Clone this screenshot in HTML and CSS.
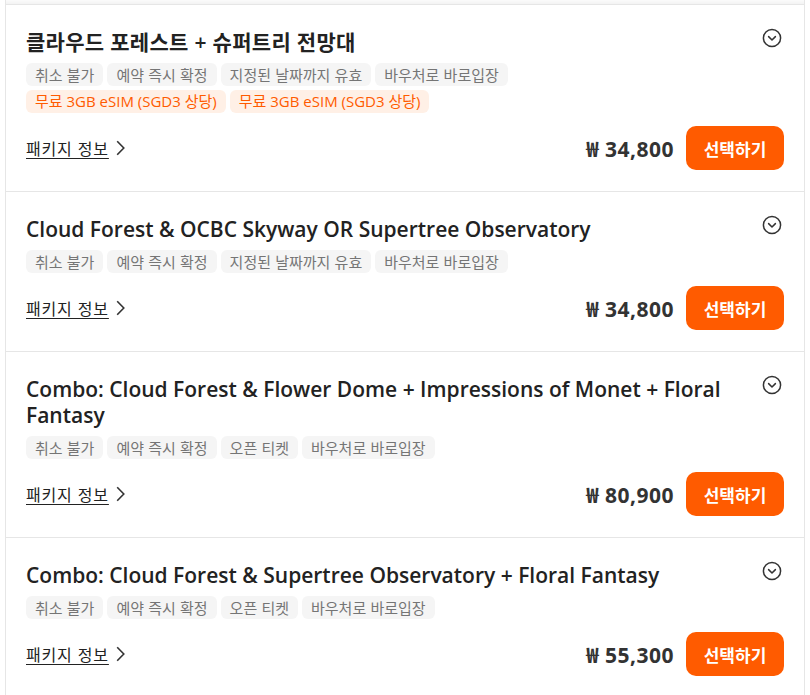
FILE: index.html
```html
<!DOCTYPE html>
<html lang="ko">
<head>
<meta charset="utf-8">
<link rel="stylesheet" href="styles.css">
</head>
<body>
<div class="list">
  <div class="stub"></div>

  <section class="card">
    <div class="head">
      <h2 class="title title-ko">클라우드 포레스트 + 슈퍼트리 전망대</h2>
      <svg class="toggle" viewBox="0 0 20 20" width="20" height="20"><circle cx="10" cy="10" r="8.6" fill="none" stroke="#333" stroke-width="1.5"/><path d="M6.6 8.6 10 12l3.4-3.4" fill="none" stroke="#333" stroke-width="1.5" stroke-linecap="round" stroke-linejoin="round"/></svg>
    </div>
    <div class="tags">
      <span class="tag">취소 불가</span>
      <span class="tag">예약 즉시 확정</span>
      <span class="tag">지정된 날짜까지 유효</span>
      <span class="tag">바우처로 바로입장</span>
    </div>
    <div class="tags">
      <span class="tag promo">무료 3GB eSIM (SGD3 상당)</span>
      <span class="tag promo">무료 3GB eSIM (SGD3 상당)</span>
    </div>
    <div class="foot">
      <a class="info" href="#">패키지 정보</a><svg class="arrow" viewBox="0 0 9 16" width="9" height="16"><path d="M1.2 1.2 7.8 8l-6.6 6.8" fill="none" stroke="#333" stroke-width="1.6"/></svg>
      <span class="price">₩ 34,800</span>
      <button class="select">선택하기</button>
    </div>
  </section>

  <section class="card">
    <div class="head">
      <h2 class="title">Cloud Forest &amp; OCBC Skyway OR Supertree Observatory</h2>
      <svg class="toggle" viewBox="0 0 20 20" width="20" height="20"><circle cx="10" cy="10" r="8.6" fill="none" stroke="#333" stroke-width="1.5"/><path d="M6.6 8.6 10 12l3.4-3.4" fill="none" stroke="#333" stroke-width="1.5" stroke-linecap="round" stroke-linejoin="round"/></svg>
    </div>
    <div class="tags">
      <span class="tag">취소 불가</span>
      <span class="tag">예약 즉시 확정</span>
      <span class="tag">지정된 날짜까지 유효</span>
      <span class="tag">바우처로 바로입장</span>
    </div>
    <div class="foot">
      <a class="info" href="#">패키지 정보</a><svg class="arrow" viewBox="0 0 9 16" width="9" height="16"><path d="M1.2 1.2 7.8 8l-6.6 6.8" fill="none" stroke="#333" stroke-width="1.6"/></svg>
      <span class="price">₩ 34,800</span>
      <button class="select">선택하기</button>
    </div>
  </section>

  <section class="card">
    <div class="head">
      <h2 class="title">Combo: Cloud Forest &amp; Flower Dome + Impressions of Monet + Floral Fantasy</h2>
      <svg class="toggle" viewBox="0 0 20 20" width="20" height="20"><circle cx="10" cy="10" r="8.6" fill="none" stroke="#333" stroke-width="1.5"/><path d="M6.6 8.6 10 12l3.4-3.4" fill="none" stroke="#333" stroke-width="1.5" stroke-linecap="round" stroke-linejoin="round"/></svg>
    </div>
    <div class="tags">
      <span class="tag">취소 불가</span>
      <span class="tag">예약 즉시 확정</span>
      <span class="tag">오픈 티켓</span>
      <span class="tag">바우처로 바로입장</span>
    </div>
    <div class="foot">
      <a class="info" href="#">패키지 정보</a><svg class="arrow" viewBox="0 0 9 16" width="9" height="16"><path d="M1.2 1.2 7.8 8l-6.6 6.8" fill="none" stroke="#333" stroke-width="1.6"/></svg>
      <span class="price">₩ 80,900</span>
      <button class="select">선택하기</button>
    </div>
  </section>

  <section class="card">
    <div class="head">
      <h2 class="title">Combo: Cloud Forest &amp; Supertree Observatory + Floral Fantasy</h2>
      <svg class="toggle" viewBox="0 0 20 20" width="20" height="20"><circle cx="10" cy="10" r="8.6" fill="none" stroke="#333" stroke-width="1.5"/><path d="M6.6 8.6 10 12l3.4-3.4" fill="none" stroke="#333" stroke-width="1.5" stroke-linecap="round" stroke-linejoin="round"/></svg>
    </div>
    <div class="tags">
      <span class="tag">취소 불가</span>
      <span class="tag">예약 즉시 확정</span>
      <span class="tag">오픈 티켓</span>
      <span class="tag">바우처로 바로입장</span>
    </div>
    <div class="foot">
      <a class="info" href="#">패키지 정보</a><svg class="arrow" viewBox="0 0 9 16" width="9" height="16"><path d="M1.2 1.2 7.8 8l-6.6 6.8" fill="none" stroke="#333" stroke-width="1.6"/></svg>
      <span class="price">₩ 55,300</span>
      <button class="select">선택하기</button>
    </div>
  </section>
</div>
</body>
</html>
```

FILE: styles.css
```css
* { box-sizing: border-box; }
html, body { margin: 0; padding: 0; background: #fff; }
body {
  font-family: "Open Sans", "Noto Sans CJK KR", sans-serif;
  color: #222;
}
.list {
  margin: 0 5px;
  width: 800px;
  border-left: 1px solid #e6e6e6;
  border-right: 1px solid #e6e6e6;
}
.stub {
  height: 4px;
  background: linear-gradient(#fbfbfb, #f3f3f3);
}
.card {
  border-top: 1px solid #e6e6e6;
  padding: 24px 20px 21px 20px;
}
.head {
  display: flex;
  align-items: flex-start;
  gap: 20px;
}
.title {
  flex: 1;
  margin: 0;
  font-size: 21px;
  line-height: 26px;
  font-weight: 600;
  color: #222;
}
.title-ko { letter-spacing: 0.3px; }
.toggle {
  flex: none;
  margin-top: -1px;
  margin-right: 2px;
}
.tags {
  display: flex;
  flex-wrap: wrap;
  gap: 5px 4px;
  margin-top: 8px;
}
.tags + .tags { margin-top: 4px; }
.tag {
  display: inline-block;
  height: 23px;
  line-height: 23px;
  padding: 0 9px;
  border-radius: 6px;
  background: #f5f5f5;
  color: #757575;
  font-size: 15px;
  font-family: "Noto Sans CJK KR", sans-serif;
}
.tag.promo {
  background: #fff0e6;
  color: #ff5b00;
  font-family: "Open Sans", "Noto Sans CJK KR", sans-serif;
}
.foot {
  display: flex;
  align-items: center;
  margin-top: 13px;
  height: 44px;
}
.info {
  color: #222;
  font-size: 16px;
  letter-spacing: 0.8px;
  font-family: "Noto Sans CJK KR", sans-serif;
  text-decoration: underline;
  text-underline-offset: 3px;
}
.arrow { margin-left: 7px; }
.price {
  margin-left: auto;
  font-size: 21px;
  font-weight: 700;
  letter-spacing: 0.5px;
  color: #333;
}
.select {
  margin-left: 12px;
  width: 98px;
  height: 44px;
  border: none;
  border-radius: 10px;
  background: #ff5b00;
  color: #fff;
  font-size: 17px;
  font-weight: 700;
  font-family: "Noto Sans CJK KR", sans-serif;
}
```
